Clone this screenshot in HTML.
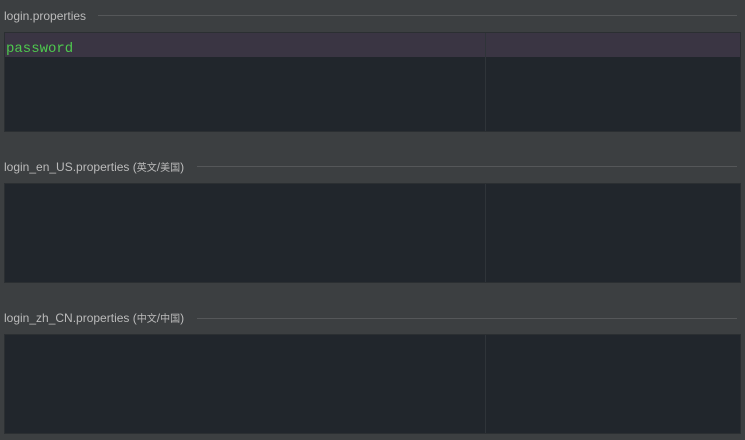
<!DOCTYPE html>
<html><head><meta charset="utf-8"><style>
body{margin:0;width:745px;height:440px;background:#3c3f41;position:relative;overflow:hidden;font-family:"Liberation Sans","Noto Sans CJK SC",sans-serif;}
.lbl{position:absolute;left:4px;font-size:12px;color:#bbbbbb;line-height:14px;white-space:nowrap;}
.c{font-size:10px;}
.line{position:absolute;height:1px;background:#555759;right:8px;}
.box{position:absolute;left:4px;width:735px;height:98px;background:#21262c;border:1px solid #2b2f32;}
.sep{position:absolute;left:480px;top:0;bottom:0;width:1px;background:#2f3439;}
.hl{position:absolute;left:0;right:0;top:0;height:24px;background:#3a3543;}
.pw{position:absolute;left:1px;top:8px;font-family:"Liberation Mono",monospace;font-size:14px;color:#4ec94e;line-height:16px;}
</style></head><body>
<div class="lbl" style="top:9px">login.properties</div><div class="line" style="top:15px;left:98px"></div>
<div class="box" style="top:32px"><div class="hl"></div><div class="sep"></div><div class="pw">password</div></div>
<div class="lbl" style="top:160px">login_en_US.properties (<span class="c">英文</span>/<span class="c">美国</span>)</div><div class="line" style="top:166px;left:197px"></div>
<div class="box" style="top:183px"><div class="sep"></div></div>
<div class="lbl" style="top:311px">login_zh_CN.properties (<span class="c">中文</span>/<span class="c">中国</span>)</div><div class="line" style="top:318px;left:197px"></div>
<div class="box" style="top:334px"><div class="sep"></div></div>
</body></html>
